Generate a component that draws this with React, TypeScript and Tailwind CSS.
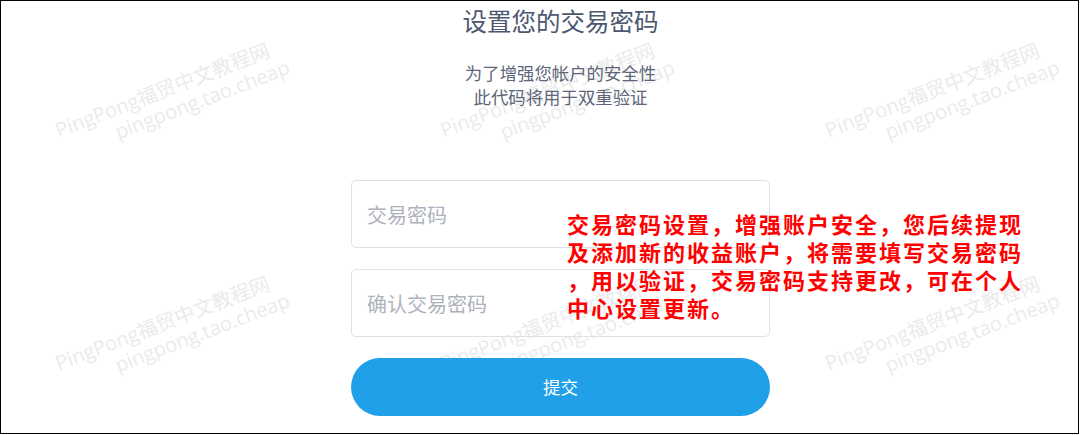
import React from 'react';

const cjk = '"Noto Sans CJK SC", "Noto Sans", sans-serif';

const marks = [
  { left: 51, top: 119 },
  { left: 436, top: 119 },
  { left: 821, top: 119 },
  { left: 51, top: 352 },
  { left: 436, top: 352 },
  { left: 821, top: 352 },
];

function Watermark({ left, top }: { left: number; top: number }) {
  return (
    <div
      className="absolute pointer-events-none select-none text-[20px] leading-[23px] text-[#ebebeb] whitespace-nowrap origin-top-left -rotate-[21deg]"
      style={{ left, top, fontFamily: '"Open Sans", "Noto Sans CJK SC", sans-serif' }}
    >
      <div>PingPong福贸中文教程网</div>
      <div className="pl-[55px]">pingpong.tao.cheap</div>
    </div>
  );
}

export default function App() {
  const note = [
    '交易密码设置，增强账户安全，您后续提现',
    '及添加新的收益账户，将需要填写交易密码',
    '，用以验证，交易密码支持更改，可在个人',
    '中心设置更新。',
  ];

  return (
    <div
      className="relative w-[1079px] h-[434px] border border-black bg-white overflow-hidden"
      style={{ fontFamily: cjk }}
    >
      {marks.map((m, i) => (
        <Watermark key={i} left={m.left} top={m.top} />
      ))}

      {/* form column */}
      <div className="relative flex flex-col items-center pl-[42px] pt-[4px]">
        <h1 className="text-[24.5px] leading-[32px] text-[#4d5770] font-normal">设置您的交易密码</h1>

        <div className="mt-[24px] flex flex-col items-center text-[17.4px] leading-[24px] text-[#5c6579]">
          <span>为了增强您帐户的安全性</span>
          <span>此代码将用于双重验证</span>
        </div>

        <div className="mt-[71px] w-[419px] flex flex-col gap-[21px]">
          <input
            type="password"
            placeholder="交易密码"
            className="h-[68px] w-full rounded-[5px] border border-[#dde0e7] bg-transparent px-[15px] text-[20px] text-[#333] placeholder:text-[#aeb2bc] outline-none"
            style={{ fontFamily: cjk }}
          />
          <input
            type="password"
            placeholder="确认交易密码"
            className="h-[68px] w-full rounded-[5px] border border-[#dde0e7] bg-transparent px-[15px] text-[20px] text-[#333] placeholder:text-[#aeb2bc] outline-none"
            style={{ fontFamily: cjk }}
          />
          <button
            className="h-[58px] w-full rounded-full bg-[#20a0e8] text-white text-[17.5px]"
            style={{ fontFamily: cjk }}
          >
            提交
          </button>
        </div>
      </div>

      {/* red annotation laid over the form */}
      <div className="absolute left-[566px] top-[208px] text-[#ff0000] font-bold text-[22px] leading-[28px] tracking-[2px] whitespace-nowrap">
        {note.map((line, i) => (
          <div key={i}>{line}</div>
        ))}
      </div>
    </div>
  );
}
